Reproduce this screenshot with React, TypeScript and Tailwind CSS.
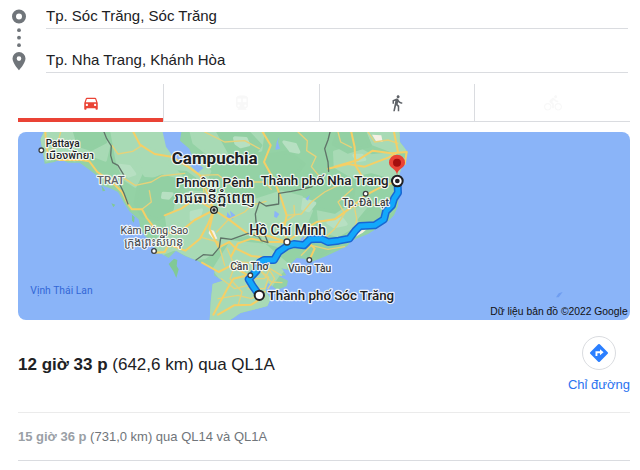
import { useState } from 'react';
import { clsx } from 'clsx';
import { MdDirectionsBike, MdDirectionsCar, MdDirectionsTransit, MdDirectionsWalk } from 'react-icons/md';

const MODES = [
  { id: 'car', label: 'Lái xe', Icon: MdDirectionsCar, color: 'text-[#ea4335]', disabled: false },
  { id: 'transit', label: 'Phương tiện công cộng', Icon: MdDirectionsTransit, color: 'text-[#f8f8f8]', disabled: true },
  { id: 'walk', label: 'Đi bộ', Icon: MdDirectionsWalk, color: 'text-[#5f6368]', disabled: false },
  { id: 'bike', label: 'Đi xe đạp', Icon: MdDirectionsBike, color: 'text-[#f8f8f8]', disabled: true },
];

const LAND =
  'M78 0 L67 22 L74 56 L80 95 L110 90 L126 82 L150 92 L185 92 L212 112 L238 132 L250 160 L280 170 L300 180 L318 212 L334 238 L362 262 L368 292 L380 312 L408 330 L412 364 L432 366 L452 378 L474 356 L500 372 L534 384 L560 398 L590 412 L588 430 L614 446 L584 456 L578 510 L575 564 L636 564 L668 543 L748 522 L758 500 L742 478 L750 452 L778 474 L806 462 L810 446 L782 432 L805 430 L790 408 L824 418 L818 396 L836 378 L860 380 L874 392 L925 372 L962 355 L988 342 L1000 326 L1050 306 L1082 286 L1112 266 L1128 250 L1140 222 L1142 190 L1150 170 L1144 130 L1156 84 L1170 62 L1146 30 L1144 0 Z';

// Rolling terrain, lighter than the forest base
const HILLS = [
  'M78 0 L250 0 L272 40 L262 84 L214 66 L170 84 L122 72 L86 84 L70 30 Z',
  'M282 0 L440 0 L520 72 L575 118 L560 150 L508 112 L420 106 L372 118 L352 162 L318 140 L298 88 Z',
  'M520 0 L735 0 L728 54 L690 60 L658 96 L616 66 L570 66 L528 32 Z',
  'M372 40 L430 66 L466 108 L500 146 L452 160 L420 132 L382 130 L358 96 Z',
  'M440 210 L520 180 L585 186 L710 206 L735 238 L714 300 L640 318 L606 344 L560 376 L532 380 L470 350 L430 366 L408 330 L452 300 Z',
  'M710 206 L790 180 L850 196 L880 236 L858 290 L900 306 L862 330 L800 346 L740 330 Z',
  'M584 456 L614 446 L588 412 L640 330 L740 340 L810 400 L780 430 L745 480 L758 500 L748 522 L636 564 L575 564 Z',
  'M950 60 L1010 44 L1060 72 L1120 66 L1160 84 L1136 140 L1060 118 L1000 132 L952 104 Z',
  'M900 222 L960 196 L1010 232 L1060 226 L1034 268 L960 310 L908 296 Z',
  'M1050 0 L1144 0 L1166 58 L1120 56 L1066 36 Z',
];

// Dense forest patches over the hills
const FOREST = [
  'M362 160 L432 132 L508 152 L470 190 L462 232 L420 262 L372 250 L352 214 Z',
  'M600 0 L690 0 L728 40 L700 80 L640 72 Z',
  'M745 70 L812 60 L858 96 L830 134 L745 132 Z',
  'M960 0 L1040 0 L1056 40 L990 60 L946 36 Z',
  'M940 160 L1008 166 L1002 206 L950 240 L880 226 Z',
  'M1050 232 L1116 206 L1104 250 L1070 270 L1024 264 Z',
  'M170 0 L250 0 L262 30 L220 52 L182 40 Z',
  'M880 330 L960 338 L900 376 L866 366 Z',
];

const PALE = [
  'M304 100 L334 104 L350 126 L332 132 L314 120 Z',
  'M650 18 L684 20 L692 38 L668 44 L654 34 Z',
  'M798 30 L832 38 L842 60 L818 56 Z',
  'M436 184 L462 186 L452 198 L434 196 Z',
  'M858 202 L890 214 L872 236 L854 230 Z',
  'M1008 70 L1032 70 L1040 82 L1018 86 Z',
  'M930 272 L972 260 L984 276 L948 284 Z',
  'M520 242 L550 234 L544 252 L520 262 Z',
];

const WATER = [
  'M434 0 L490 0 L486 26 L514 50 L526 82 L556 108 L540 122 L512 96 L478 92 L444 44 Z',
  'M772 54 L786 50 L780 30 L784 14 L776 30 Z',
  'M628 240 L640 256 L636 236 L652 250 L644 262 L626 256 Z',
  'M770 236 L784 246 L776 258 L768 254 Z',
  'M862 200 L876 188 L870 206 Z',
  'M848 320 L858 312 L862 330 L850 336 Z',
];

const MAJOR_ROADS = [
  'M82 0 L84 34 L92 76 L126 84 L190 84 L214 88 L238 120 L280 148 L312 180 L330 216 L342 232 L372 232 L386 258 L408 286 L436 300 L478 306 L530 264 L588 234',
  'M346 0 L366 38 L410 66 L460 74 L510 104 L546 130 L562 168 L588 234',
  'M408 362 L440 360 L452 338 L502 356 L546 320 L570 276 L588 234',
  'M588 234 L632 262 L690 306 L752 312 L806 330',
  'M588 234 L574 290 L602 346 L634 330 L654 350 L700 372 L740 376',
  'M734 0 L758 40 L738 90 L770 148 L790 200 L806 250 L798 290 L806 330',
  'M806 330 L850 298 L896 270 L950 262 L1008 220 L1042 190 L1080 170 L1134 148',
  'M806 330 L752 330 L700 320 L660 334 L640 372',
  'M1160 96 L1166 60 L1120 64 L1064 56 L1020 84 L950 104',
  'M600 548 L648 520 L700 518 L738 494 L724 488',
  'M586 548 L628 470 L646 440 L690 430 L640 400 L602 420 L552 392',
  'M1000 0 L1010 46 L1012 100 L1030 130',
  'M930 110 L990 96 L1040 104 L1112 76 L1140 60 L1128 0',
  'M874 384 L890 350 L860 320',
  'M588 234 L532 200 L490 230 L440 250',
];

const MINOR_ROADS = [
  'M282 40 L300 66 L344 58 L372 40',
  'M128 0 L120 30 L96 60',
  'M320 140 L352 160 L400 150 L430 132 L500 124',
  'M372 232 L400 210 L394 176',
  'M560 0 L620 30 L680 26 L724 50',
  'M548 130 L600 128 L640 160 L700 150 L740 150 L760 172',
  'M596 300 L632 262 L680 240 L700 220 L744 208',
  'M610 440 L650 470 L690 460 L730 500',
  'M628 350 L650 402 L636 440 L672 480 L660 520',
  'M652 390 L700 392 L730 420 L760 450 L792 452',
  'M700 440 L740 440 L756 410 L790 430',
  'M690 470 L740 470 L752 436 L720 410',
  'M600 500 L660 490 L700 500 L742 478',
  'M752 410 L770 440 L750 470',
  'M806 250 L850 246 L880 210 L920 180 L960 160',
  'M760 288 L800 270 L830 250 L828 220',
  'M908 330 L950 290 L980 244 L960 210 L1004 170',
  'M1008 220 L1016 260 L1012 290',
  'M1008 220 L1060 220 L1100 210 L1130 190',
  'M850 370 L880 340 L930 352 L980 344',
  'M840 0 L868 26 L866 56 L894 74 L880 104 L910 140',
  'M960 0 L968 30 L1000 46',
  'M1050 0 L1070 30 L1110 24 L1140 34',
  'M550 316 L600 330 L620 400',
  'M590 234 L560 200 L556 168',
];

const BORDERS = [
  'M258 0 L266 20 L280 42 L278 70 L284 92 L300 100 L318 130 L306 158 L318 184 L330 216',
  'M534 384 L556 368 L584 370 L604 346 L608 318 L640 322 L690 304 L722 314 L730 326 L750 332 L742 312 L716 290 L712 246 L724 210 L744 222 L782 216 L782 184 L820 178 L860 170 L882 164',
  'M936 0 L930 24 L920 50 L930 90 L932 118',
];

const ROUTE =
  'M724 490 L704 462 L692 442 L716 416 L724 392 L738 384 L768 384 L782 360 L808 342 L828 336 L858 340 L876 322 L910 320 L930 330 L962 326 L994 320 L1012 296 L1026 282 L1070 280 L1098 262 L1104 238 L1122 220 L1128 200 L1140 182 L1139 160';

interface PlaceProps {
  x: number;
  y: number;
  size: number;
  weight?: number;
  fill?: string;
  anchor?: 'start' | 'middle' | 'end';
  children: string;
}

function Place({ x, y, size, weight = 500, fill = '#202124', anchor = 'start', children }: PlaceProps) {
  return (
    <text
      x={x}
      y={y}
      fontSize={size}
      fontWeight={weight}
      fill={fill}
      textAnchor={anchor}
      stroke="#ffffff"
      strokeWidth={7}
      strokeLinejoin="round"
      strokeOpacity={0.85}
      paintOrder="stroke"
    >
      {children}
    </text>
  );
}

function RouteMap() {
  return (
    <svg
      viewBox="0 0 1836 564"
      className="block h-auto w-full rounded-lg bg-[#8ab4f8] font-[Roboto,'Noto_Sans_Thai','Noto_Sans_Khmer','Noto_Sans',sans-serif]"
      role="img"
      aria-label="Tp. Sóc Trăng – Tp. Nha Trang"
    >
      <defs>
        <clipPath id="land">
          <path d={LAND} />
        </clipPath>
      </defs>
      <path d={LAND} fill="#94d2a5" />
      <g clipPath="url(#land)" strokeLinejoin="round" strokeWidth={10}>
        {HILLS.map((d) => <path key={d} d={d} fill="#a8dab5" stroke="#a8dab5" />)}
        {FOREST.map((d) => <path key={d} d={d} fill="#92d0a3" stroke="#92d0a3" />)}
        {PALE.map((d) => <path key={d} d={d} fill="#b7e0c2" stroke="#b7e0c2" />)}
        {WATER.map((d) => <path key={d} d={d} fill="#8ab4f8" />)}
        <path d="M574 292 L588 296 L598 320 L586 322 L572 304 Z M1062 8 L1074 28 L1094 30 L1090 10 Z" fill="#f5f0e4" />
      </g>

      {/* Islands */}
      <path d="M468 380 L478 384 L476 402 L482 412 L475 438 L466 418 L452 396 Z" fill="#81c995" />
      <path d="M250 160 L262 176 L254 178 Z M280 214 L292 218 L286 226 Z M342 248 L350 256 L348 272 L342 266 Z" fill="#81c995" />
      <path d="M1010 316 L1022 296 L1046 292 L1034 302 Z" fill="#f5f0e4" />
      <path d="M1614 496 L1622 484 L1634 480 L1622 496 Z" fill="#6f9df0" />

      <g fill="none" strokeLinejoin="round" strokeLinecap="round">
        {MINOR_ROADS.map((d) => <path key={d} d={d} stroke="#e6d27a" strokeWidth={4} />)}
        {MAJOR_ROADS.map((d) => <path key={d} d={d} stroke="#f5cf66" strokeWidth={6} />)}
        {BORDERS.map((d) => <path key={d} d={d} stroke="#5f7468" strokeWidth={4} />)}
        <path d={ROUTE} stroke="#1967d2" strokeWidth={24} />
        <path d={ROUTE} stroke="#12a8fb" strokeWidth={15} />
      </g>

      <Place x={83} y={46} size={30}>Pattaya</Place>
      <Place x={83} y={80} size={33}>เมืองพัทยา</Place>
      <Place x={237} y={156} size={34} fill="#5f6368">TRAT</Place>
      <Place x={590} y={97} size={51} weight={700} anchor="middle">Campuchia</Place>
      <Place x={590} y={165} size={41} anchor="middle">Phnôm Pênh</Place>
      <Place x={590} y={213} size={45} anchor="middle">រាជធានីភ្នំពេញ</Place>
      <Place x={409} y={305} size={31} weight={400} fill="#3c4043" anchor="middle">Kâm Póng Sao</Place>
      <Place x={407} y={341} size={33} weight={400} fill="#3c4043" anchor="middle">ក្រុងព្រះសីហនុ</Place>
      <Place x={809} y={309} size={42} anchor="middle">Hồ Chí Minh</Place>
      <Place x={694} y={415} size={31} fill="#3c4043" anchor="middle">Cần Thơ</Place>
      <Place x={875} y={421} size={31} fill="#3c4043" anchor="middle">Vũng Tàu</Place>
      <Place x={1043} y={221} size={31} fill="#3c4043" anchor="middle">Tp. Đà Lạt</Place>
      <Place x={1112} y={160} size={40} anchor="end">Thành phố Nha Trang</Place>
      <Place x={749} y={504} size={40}>Thành phố Sóc Trăng</Place>
      <text x={37} y={486} fontSize={31} fill="#3367d6">Vịnh Thái Lan</text>

      {/* Towns */}
      <g fill="#ffffff" stroke="#3c4043" strokeWidth={4}>
        <circle cx={70} cy={55} r={7} />
        <circle cx={408} cy={357} r={7} />
        <circle cx={807} cy={330} r={9} />
        <circle cx={697} cy={430} r={7} />
        <circle cx={874} cy={384} r={7} />
        <circle cx={1043} cy={185} r={7} />
      </g>
      <circle cx={588} cy={234} r={10} fill="#cfd8cf" stroke="#202124" strokeWidth={4} />
      <circle cx={588} cy={234} r={5} fill="#202124" />

      {/* Origin and destination */}
      <circle cx={724} cy={490} r={14} fill="#ffffff" stroke="#202124" strokeWidth={6} />
      <path d="M1137 128 C1134 108 1113 108 1113 92 A24 24 0 0 1 1161 92 C1161 108 1140 108 1137 128 Z" fill="#ea4335" />
      <circle cx={1137} cy={92} r={12} fill="#a50e0e" />
      <circle cx={1138} cy={147} r={16} fill="#ffffff" stroke="#202124" strokeWidth={6} />
      <circle cx={1138} cy={147} r={7} fill="#202124" />

      <text x={1829} y={550} fontSize={31} textAnchor="end" fill="#111111" className="font-['Liberation_Sans',sans-serif]">
        Dữ liệu bản đồ ©2022 Google
      </text>
    </svg>
  );
}

export default function App() {
  const [mode, setMode] = useState('car');

  return (
    <main className="bg-white pr-[10px] pl-[18px] font-['Liberation_Sans',Arial,sans-serif] text-[#202124]">
      {/* Origin / destination */}
      <form className="-ml-[6px] flex gap-5 pr-[2px]">
        <svg viewBox="0 0 14 74" className="h-[74px] w-[14px] shrink-0" aria-hidden="true">
          <circle cx="7" cy="16.5" r="5" fill="none" stroke="#70757a" strokeWidth="4" />
          <circle cx="7" cy="30.2" r="1.9" fill="#70757a" />
          <circle cx="7" cy="37.7" r="1.9" fill="#70757a" />
          <circle cx="7" cy="45.2" r="1.9" fill="#70757a" />
          <path
            d="M7 52 A6.5 6.5 0 0 0 0.5 58.5 C0.5 63.2 7 70.3 7 70.3 C7 70.3 13.5 63.2 13.5 58.5 A6.5 6.5 0 0 0 7 52 Z M7 56.3 A2.3 2.3 0 1 1 7 60.9 A2.3 2.3 0 1 1 7 56.3 Z"
            fill="#70757a"
            fillRule="evenodd"
          />
        </svg>
        <div className="flex flex-1 flex-col gap-[15px]">
          <input
            aria-label="Điểm xuất phát"
            defaultValue="Tp. Sóc Trăng, Sóc Trăng"
            className="h-[29px] w-full border-b border-[#dadce0] pt-[2px] text-[15px] outline-none"
          />
          <input
            aria-label="Điểm đến"
            defaultValue="Tp. Nha Trang, Khánh Hòa"
            className="h-[29px] w-full border-b border-[#dadce0] pt-[2px] text-[15px] outline-none"
          />
        </div>
      </form>

      <div role="tablist" className="mt-[10px] grid grid-cols-[146fr_156fr_155fr_155fr]">
        {MODES.map(({ id, label, Icon, color, disabled }) => (
          <button
            key={id}
            role="tab"
            aria-label={label}
            aria-selected={mode === id}
            disabled={disabled}
            onClick={() => setMode(id)}
            className={clsx(
              'flex h-[38px] items-center justify-center border-r border-[#dadce0] last:border-r-0',
              mode === id ? 'shadow-[inset_0_-4px_0_#ea4335]' : 'shadow-[inset_0_-1px_0_#dadce0]',
              color,
            )}
          >
            <Icon className="size-[18px]" />
          </button>
        ))}
      </div>

      <div className="mt-[10px]">
        <RouteMap />
      </div>

      {/* Best route */}
      <section className="flex items-center justify-between border-b border-[#ebebeb] pt-4 pb-[18px]">
        <p className="text-[17px] leading-6">
          <b>12 giờ 33 p</b> (642,6 km) qua QL1A
        </p>
        <a href="#directions" className="flex flex-col items-center gap-[6px] text-[13px] leading-[18px] text-[#2b73f0]">
          <span className="flex size-[34px] items-center justify-center rounded-full border border-[#dadce0]">
            <svg viewBox="0 0 20 20" className="size-5" aria-hidden="true">
              <path
                d="M9.2 1.3 a1.1 1.1 0 0 1 1.6 0 L18.7 9.2 a1.1 1.1 0 0 1 0 1.6 L10.8 18.7 a1.1 1.1 0 0 1 -1.6 0 L1.3 10.8 a1.1 1.1 0 0 1 0 -1.6 Z"
                fill="#2b7fff"
              />
              <path d="M6.5 13 V8.3 H11 V6.3 L14.6 9.3 L11 12.3 V10.2 H8.4 V13 Z" fill="#ffffff" />
            </svg>
          </span>
          Chỉ đường
        </a>
      </section>

      {/* Alternative route */}
      <section className="border-b border-[#dadce0] pt-[14px] pb-[13px]">
        <p className="text-[13px] leading-5 text-[#70757a]">
          <b className="text-[#9aa0a6]">15 giờ 36 p</b> (731,0 km) qua QL14 và QL1A
        </p>
      </section>
    </main>
  );
}
